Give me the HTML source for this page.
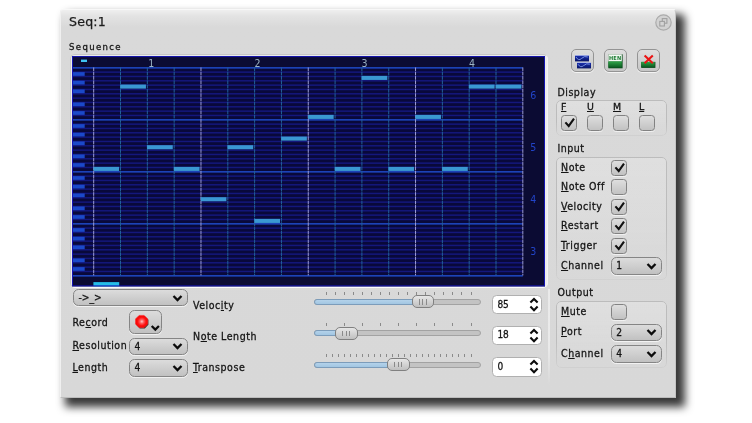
<!DOCTYPE html>
<html lang="en"><head><meta charset="utf-8"><title>Seq:1</title>
<style>
html,body{margin:0;padding:0}
body{width:752px;height:423px;background:#fff;position:relative;overflow:hidden;font-family:"DejaVu Sans Condensed","DejaVu Sans","Liberation Sans",sans-serif;font-stretch:condensed;color:#141414;-webkit-text-stroke:0.28px #141414}
body *{position:absolute;box-sizing:border-box}
.win{left:60px;top:9px;width:616px;height:388.5px;background:linear-gradient(#efefef 0,#e3e3e3 6px,#d9d9d9 17px,#d8d8d8 100%);border-top:1px solid #f8f8f8;border-left:1px solid #f0f0f0;border-right:1px solid #c4c4c4;border-bottom:1px solid #bcbcbc;border-radius:3px 3px 0 0;box-shadow:7px 7px 9px 2px rgba(0,0,0,.78)}
.title{font-family:"DejaVu Sans","Liberation Sans",sans-serif;font-stretch:normal;font-size:12.6px;letter-spacing:.2px;line-height:18px;white-space:nowrap;color:#1c1c1c;-webkit-text-stroke:0.25px #1c1c1c}
.lb{font-size:10.5px;line-height:14px;white-space:nowrap;letter-spacing:.55px;color:#141414}
.lb u{position:static;text-decoration:underline;text-underline-offset:1px;text-decoration-thickness:1px}
.fl{font-family:"DejaVu Sans","Liberation Sans",sans-serif;font-stretch:normal;font-size:9.4px;letter-spacing:0;-webkit-text-stroke:0.3px #141414}
.lb.fl u{text-underline-offset:1px;text-decoration-thickness:1.2px}
.sm{font-size:9.5px;letter-spacing:1.35px}
.layer{left:0;top:0;width:752px;height:423px;will-change:transform}
.frame{left:69.5px;top:54px;width:478.5px;height:233.8px;border-radius:5px;background:#ececec;border:1px solid #c6c6c6;border-bottom-color:#fafafa;border-right-color:#f4f4f4}
.roll text{font-family:"DejaVu Sans Condensed","DejaVu Sans","Liberation Sans",sans-serif;-webkit-text-stroke:0}
.bt{font-size:10.5px;fill:#9cb4c4;text-anchor:middle}
.oc{font-size:10.5px;fill:#2244c8;text-anchor:middle}
.vsep{left:547.5px;top:289px;width:2px;height:97px;background:linear-gradient(rgba(236,236,236,.9) 60%,rgba(236,236,236,0))}
.tb{width:23px;height:23px;border-radius:5px;border:1px solid #949494;background:linear-gradient(#dedede,#c6c6c6);box-shadow:0 1px 0 rgba(255,255,255,.7)}
.tb svg{left:3px;top:3.4px}
.gb{border-radius:5px;border:1px solid #bcbcbc;background:linear-gradient(rgba(255,255,255,.18),rgba(255,255,255,.02));-webkit-mask-image:linear-gradient(#000 60%,rgba(0,0,0,.25));mask-image:linear-gradient(#000 60%,rgba(0,0,0,.25))}
.ck{width:16px;height:16px;border-radius:3.5px;border:1px solid #828282;background:linear-gradient(#dedede,#c2c2c2);box-shadow:0 1px 0 rgba(255,255,255,.6)}
.ck svg{left:-1px;top:-1px}
.cb{border-radius:5.5px;border:1px solid #858585;background:linear-gradient(#dcdcdc,#c1c1c1);box-shadow:0 1px 0 rgba(255,255,255,.65)}
.cb span{left:4.4px;top:1.1px;font-size:10.2px;line-height:14px;white-space:nowrap}
.cb .cv{right:4px;top:3.6px}
.rec svg{left:-1px;top:-1px}
.gr{left:313.8px;width:167.5px;height:6px;border-radius:3px;background:#c3c3c3;border:1px solid #a2a2a2}
.gf{left:313.8px;height:6px;border-radius:3px;background:linear-gradient(#b4d2ea,#a2c6e2);border:1px solid #7c9cba}
.tk{width:1px;height:3.3px;background:#8a8a8a}
.hd{width:22.4px;height:13.2px;border-radius:5px;border:1px solid #808080;background:linear-gradient(#e6e6e6,#c0c0c0)}
.hd b{top:3.2px;width:1px;height:5.2px;background:#8a8a8a}
.hd b:nth-child(1){left:6.2px}.hd b:nth-child(2){left:9.4px}.hd b:nth-child(3){left:12.6px}
.sp{left:492px;width:50.4px;height:19.4px;border-radius:4.5px;border:1px solid #b0b0b0;background:#fff}
.sp span{left:4.4px;top:1.9px;font-size:10px;line-height:14px}
.sp svg{right:2.6px;top:1px}
</style></head>
<body>
<div class="win"></div>
<div class="layer">
<div class="title" style="left:69px;top:13.2px">Seq:1</div>
<div class="lb sm" style="left:69px;top:39.6px">Sequence</div>
<svg class="abs" style="left:655px;top:13.5px" width="17" height="17" viewBox="0 0 17 17"><circle cx="8.5" cy="8.5" r="7.7" fill="#d2d2d2" stroke="#ababab" stroke-width="1.2"/><rect x="7.3" y="4.6" width="4.6" height="4.6" fill="none" stroke="#a0a0a0" stroke-width="1.1"/><rect x="4.8" y="7.4" width="4.6" height="4.6" fill="#d4d4d4" stroke="#a0a0a0" stroke-width="1.1"/></svg>
<div class="frame"></div>
<svg class="roll" width="752" height="423" viewBox="0 0 752 423" style="left:0;top:0">
<rect x="72" y="56.1" width="473" height="230.3" fill="#0b0b33"/>
<rect x="72" y="67.45" width="450.82" height="207.98" fill="#09093a"/>
<rect x="72" y="67.10" width="450.82" height="1.5" fill="#1f49c4"/>
<rect x="72" y="71.38" width="450.82" height="1.5" fill="#14177c"/>
<rect x="72" y="75.72" width="450.82" height="1.5" fill="#14177c"/>
<rect x="72" y="80.05" width="450.82" height="1.5" fill="#14177c"/>
<rect x="72" y="84.38" width="450.82" height="1.5" fill="#14177c"/>
<rect x="72" y="88.72" width="450.82" height="1.5" fill="#14177c"/>
<rect x="72" y="93.05" width="450.82" height="1.5" fill="#14177c"/>
<rect x="72" y="97.38" width="450.82" height="1.5" fill="#14177c"/>
<rect x="72" y="101.71" width="450.82" height="1.5" fill="#14177c"/>
<rect x="72" y="106.05" width="450.82" height="1.5" fill="#14177c"/>
<rect x="72" y="110.38" width="450.82" height="1.5" fill="#14177c"/>
<rect x="72" y="114.71" width="450.82" height="1.5" fill="#14177c"/>
<rect x="72" y="119.10" width="450.82" height="1.5" fill="#1f49c4"/>
<rect x="72" y="123.38" width="450.82" height="1.5" fill="#14177c"/>
<rect x="72" y="127.71" width="450.82" height="1.5" fill="#14177c"/>
<rect x="72" y="132.04" width="450.82" height="1.5" fill="#14177c"/>
<rect x="72" y="136.38" width="450.82" height="1.5" fill="#14177c"/>
<rect x="72" y="140.71" width="450.82" height="1.5" fill="#14177c"/>
<rect x="72" y="145.04" width="450.82" height="1.5" fill="#14177c"/>
<rect x="72" y="149.38" width="450.82" height="1.5" fill="#14177c"/>
<rect x="72" y="153.71" width="450.82" height="1.5" fill="#14177c"/>
<rect x="72" y="158.04" width="450.82" height="1.5" fill="#14177c"/>
<rect x="72" y="162.38" width="450.82" height="1.5" fill="#14177c"/>
<rect x="72" y="166.71" width="450.82" height="1.5" fill="#14177c"/>
<rect x="72" y="171.09" width="450.82" height="1.5" fill="#1f49c4"/>
<rect x="72" y="175.38" width="450.82" height="1.5" fill="#14177c"/>
<rect x="72" y="179.71" width="450.82" height="1.5" fill="#14177c"/>
<rect x="72" y="184.04" width="450.82" height="1.5" fill="#14177c"/>
<rect x="72" y="188.37" width="450.82" height="1.5" fill="#14177c"/>
<rect x="72" y="192.71" width="450.82" height="1.5" fill="#14177c"/>
<rect x="72" y="197.04" width="450.82" height="1.5" fill="#14177c"/>
<rect x="72" y="201.37" width="450.82" height="1.5" fill="#14177c"/>
<rect x="72" y="205.71" width="450.82" height="1.5" fill="#14177c"/>
<rect x="72" y="210.04" width="450.82" height="1.5" fill="#14177c"/>
<rect x="72" y="214.37" width="450.82" height="1.5" fill="#14177c"/>
<rect x="72" y="218.71" width="450.82" height="1.5" fill="#14177c"/>
<rect x="72" y="223.09" width="450.82" height="1.5" fill="#1f49c4"/>
<rect x="72" y="227.37" width="450.82" height="1.5" fill="#14177c"/>
<rect x="72" y="231.70" width="450.82" height="1.5" fill="#14177c"/>
<rect x="72" y="236.04" width="450.82" height="1.5" fill="#14177c"/>
<rect x="72" y="240.37" width="450.82" height="1.5" fill="#14177c"/>
<rect x="72" y="244.70" width="450.82" height="1.5" fill="#14177c"/>
<rect x="72" y="249.04" width="450.82" height="1.5" fill="#14177c"/>
<rect x="72" y="253.37" width="450.82" height="1.5" fill="#14177c"/>
<rect x="72" y="257.70" width="450.82" height="1.5" fill="#14177c"/>
<rect x="72" y="262.04" width="450.82" height="1.5" fill="#14177c"/>
<rect x="72" y="266.37" width="450.82" height="1.5" fill="#14177c"/>
<rect x="72" y="270.70" width="450.82" height="1.5" fill="#14177c"/>
<rect x="72" y="275.08" width="450.82" height="1.5" fill="#1f49c4"/>
<rect x="72" y="72.13" width="12.7" height="3.73" fill="#1b49c9"/>
<rect x="72" y="80.80" width="12.7" height="3.73" fill="#1b49c9"/>
<rect x="72" y="89.47" width="12.7" height="3.73" fill="#1b49c9"/>
<rect x="72" y="102.46" width="12.7" height="3.73" fill="#1b49c9"/>
<rect x="72" y="111.13" width="12.7" height="3.73" fill="#1b49c9"/>
<rect x="72" y="124.13" width="12.7" height="3.73" fill="#1b49c9"/>
<rect x="72" y="132.79" width="12.7" height="3.73" fill="#1b49c9"/>
<rect x="72" y="141.46" width="12.7" height="3.73" fill="#1b49c9"/>
<rect x="72" y="154.46" width="12.7" height="3.73" fill="#1b49c9"/>
<rect x="72" y="163.13" width="12.7" height="3.73" fill="#1b49c9"/>
<rect x="72" y="176.12" width="12.7" height="3.73" fill="#1b49c9"/>
<rect x="72" y="184.79" width="12.7" height="3.73" fill="#1b49c9"/>
<rect x="72" y="193.46" width="12.7" height="3.73" fill="#1b49c9"/>
<rect x="72" y="206.46" width="12.7" height="3.73" fill="#1b49c9"/>
<rect x="72" y="215.12" width="12.7" height="3.73" fill="#1b49c9"/>
<rect x="72" y="228.12" width="12.7" height="3.73" fill="#1b49c9"/>
<rect x="72" y="236.79" width="12.7" height="3.73" fill="#1b49c9"/>
<rect x="72" y="245.45" width="12.7" height="3.73" fill="#1b49c9"/>
<rect x="72" y="258.45" width="12.7" height="3.73" fill="#1b49c9"/>
<rect x="72" y="267.12" width="12.7" height="3.73" fill="#1b49c9"/>
<line x1="93.70" y1="67.45" x2="93.70" y2="275.43" stroke="#9c9cd4" stroke-width="1" stroke-dasharray="3.7 0.6"/>
<line x1="120.52" y1="67.45" x2="120.52" y2="275.43" stroke="#22609a" stroke-width="1" stroke-dasharray="3.7 0.6"/>
<line x1="147.34" y1="67.45" x2="147.34" y2="275.43" stroke="#22609a" stroke-width="1" stroke-dasharray="3.7 0.6"/>
<line x1="174.16" y1="67.45" x2="174.16" y2="275.43" stroke="#22609a" stroke-width="1" stroke-dasharray="3.7 0.6"/>
<line x1="200.98" y1="67.45" x2="200.98" y2="275.43" stroke="#9c9cd4" stroke-width="1" stroke-dasharray="3.7 0.6"/>
<line x1="227.80" y1="67.45" x2="227.80" y2="275.43" stroke="#22609a" stroke-width="1" stroke-dasharray="3.7 0.6"/>
<line x1="254.62" y1="67.45" x2="254.62" y2="275.43" stroke="#22609a" stroke-width="1" stroke-dasharray="3.7 0.6"/>
<line x1="281.44" y1="67.45" x2="281.44" y2="275.43" stroke="#22609a" stroke-width="1" stroke-dasharray="3.7 0.6"/>
<line x1="308.26" y1="67.45" x2="308.26" y2="275.43" stroke="#9c9cd4" stroke-width="1" stroke-dasharray="3.7 0.6"/>
<line x1="335.08" y1="67.45" x2="335.08" y2="275.43" stroke="#22609a" stroke-width="1" stroke-dasharray="3.7 0.6"/>
<line x1="361.90" y1="67.45" x2="361.90" y2="275.43" stroke="#22609a" stroke-width="1" stroke-dasharray="3.7 0.6"/>
<line x1="388.72" y1="67.45" x2="388.72" y2="275.43" stroke="#22609a" stroke-width="1" stroke-dasharray="3.7 0.6"/>
<line x1="415.54" y1="67.45" x2="415.54" y2="275.43" stroke="#9c9cd4" stroke-width="1" stroke-dasharray="3.7 0.6"/>
<line x1="442.36" y1="67.45" x2="442.36" y2="275.43" stroke="#22609a" stroke-width="1" stroke-dasharray="3.7 0.6"/>
<line x1="469.18" y1="67.45" x2="469.18" y2="275.43" stroke="#22609a" stroke-width="1" stroke-dasharray="3.7 0.6"/>
<line x1="496.00" y1="67.45" x2="496.00" y2="275.43" stroke="#22609a" stroke-width="1" stroke-dasharray="3.7 0.6"/>
<line x1="522.82" y1="67.45" x2="522.82" y2="275.43" stroke="#9c9cd4" stroke-width="1" stroke-dasharray="3.7 0.6"/>
<rect x="93.40" y="166.86" width="25.72" height="4.08" fill="#3a98d2"/>
<rect x="120.22" y="84.53" width="25.72" height="4.08" fill="#3a98d2"/>
<rect x="147.04" y="145.19" width="25.72" height="4.08" fill="#3a98d2"/>
<rect x="173.86" y="166.86" width="25.72" height="4.08" fill="#3a98d2"/>
<rect x="200.68" y="197.19" width="25.72" height="4.08" fill="#3a98d2"/>
<rect x="227.50" y="145.19" width="25.72" height="4.08" fill="#3a98d2"/>
<rect x="254.32" y="218.86" width="25.72" height="4.08" fill="#3a98d2"/>
<rect x="281.14" y="136.53" width="25.72" height="4.08" fill="#3a98d2"/>
<rect x="307.96" y="114.86" width="25.72" height="4.08" fill="#3a98d2"/>
<rect x="334.78" y="166.86" width="25.72" height="4.08" fill="#3a98d2"/>
<rect x="361.60" y="75.87" width="25.72" height="4.08" fill="#3a98d2"/>
<rect x="388.42" y="166.86" width="25.72" height="4.08" fill="#3a98d2"/>
<rect x="415.24" y="114.86" width="25.72" height="4.08" fill="#3a98d2"/>
<rect x="442.06" y="166.86" width="25.72" height="4.08" fill="#3a98d2"/>
<rect x="468.88" y="84.53" width="25.72" height="4.08" fill="#3a98d2"/>
<rect x="495.70" y="84.53" width="25.72" height="4.08" fill="#3a98d2"/>
<rect x="81" y="59.6" width="6" height="2.4" fill="#3fc3f3"/>
<rect x="93.40" y="282.1" width="25.82" height="4.3" fill="#25bde8"/>
<text x="151.2" y="67" class="bt">1</text>
<text x="257.6" y="67" class="bt">2</text>
<text x="364.6" y="67" class="bt">3</text>
<text x="472" y="67" class="bt">4</text>
<text x="533.3" y="98.5" class="oc">6</text>
<text x="533.3" y="150.5" class="oc">5</text>
<text x="533.3" y="202.5" class="oc">4</text>
<text x="533.3" y="254.5" class="oc">3</text>
<rect x="72.5" y="56.6" width="472" height="229.3" fill="none" stroke="#1414b4" stroke-width="1"/>
</svg>
<div class="vsep"></div>
<div class="tb" style="left:571.3px;top:48.8px"></div>
<div class="tb" style="left:604px;top:48.8px"></div>
<div class="tb" style="left:636.6px;top:48.8px"></div>
<svg class="roll" width="752" height="423" viewBox="0 0 752 423" style="left:0;top:0"><defs><linearGradient id="gg" x1="0" y1="0" x2="0" y2="1"><stop offset="0" stop-color="#2fa548"/><stop offset="1" stop-color="#0a5a20"/></linearGradient><linearGradient id="bb" x1="0" y1="0" x2="0" y2="1"><stop offset="0" stop-color="#1a2fae"/><stop offset="1" stop-color="#081466"/></linearGradient></defs><rect x="575" y="54.8" width="14" height="1.2" fill="#e8eeff"/><rect x="575" y="55.6" width="14" height="5.8" fill="url(#bb)"/><path d="M576 57 Q578.6 61.4 581.6 58.4 T587.8 57" fill="none" stroke="#7f98e8" stroke-width="0.9"/><rect x="577" y="62.3" width="14" height="1" fill="#b8c4f0"/><rect x="577" y="62.9" width="14" height="5.5" fill="url(#bb)"/><path d="M578 64.2 Q580.6 68.4 583.6 65.6 T589.8 64.2" fill="none" stroke="#7f98e8" stroke-width="0.9"/><rect x="608.4" y="54.3" width="14.2" height="14" fill="#0a4a1a"/><rect x="608.4" y="54.3" width="13.4" height="7.2" fill="#f4faf4"/><rect x="608.4" y="61.4" width="13.4" height="6.2" fill="url(#gg)"/><text x="608.9" y="60.3" font-size="5.6" font-family="Liberation Sans, sans-serif" font-weight="bold" fill="#187a30" letter-spacing="0.2">HEN</text><rect x="641.2" y="61.9" width="14.2" height="6" fill="#0a4a1a"/><rect x="641.2" y="61.9" width="13.5" height="5.2" fill="url(#gg)"/><path d="M644.6 55.4 L652.8 63.2 M652.8 55.4 L644.6 63.2" stroke="#ea1414" stroke-width="2.1" fill="none"/></svg>
<div class="lb" style="left:557.4px;top:84.5px">Display</div>
<div class="gb" style="left:556px;top:100.3px;width:111px;height:36px"></div>
<div class="lb fl" style="left:561px;top:99.9px"><u>F</u></div>
<div class="ck" style="left:561.3px;top:115px"><svg width="16" height="16" viewBox="0 0 16 16"><path d="M4.4 7.4 L7.7 11 L13 3.6" fill="none" stroke="#111" stroke-width="2.1" stroke-linejoin="miter"/></svg></div>
<div class="lb fl" style="left:587px;top:99.9px"><u>U</u></div>
<div class="ck" style="left:587.25px;top:115px"></div>
<div class="lb fl" style="left:613px;top:99.9px"><u>M</u></div>
<div class="ck" style="left:613.1999999999999px;top:115px"></div>
<div class="lb fl" style="left:639px;top:99.9px"><u>L</u></div>
<div class="ck" style="left:639.15px;top:115px"></div>
<div class="lb" style="left:557.4px;top:141.0px">Input</div>
<div class="gb" style="left:556px;top:156.7px;width:111px;height:123px"></div>
<div class="lb" style="left:561px;top:159.8px"><u>N</u>ote</div>
<div class="ck" style="left:610.7px;top:159.70000000000002px"><svg width="16" height="16" viewBox="0 0 16 16"><path d="M4.4 7.4 L7.7 11 L13 3.6" fill="none" stroke="#111" stroke-width="2.1" stroke-linejoin="miter"/></svg></div>
<div class="lb" style="left:561px;top:179.2px"><u>N</u>ote Off</div>
<div class="ck" style="left:610.7px;top:179.1px"></div>
<div class="lb" style="left:561px;top:198.8px"><u>V</u>elocity</div>
<div class="ck" style="left:610.7px;top:198.70000000000002px"><svg width="16" height="16" viewBox="0 0 16 16"><path d="M4.4 7.4 L7.7 11 L13 3.6" fill="none" stroke="#111" stroke-width="2.1" stroke-linejoin="miter"/></svg></div>
<div class="lb" style="left:561px;top:218.2px"><u>R</u>estart</div>
<div class="ck" style="left:610.7px;top:218.1px"><svg width="16" height="16" viewBox="0 0 16 16"><path d="M4.4 7.4 L7.7 11 L13 3.6" fill="none" stroke="#111" stroke-width="2.1" stroke-linejoin="miter"/></svg></div>
<div class="lb" style="left:561px;top:237.6px"><u>T</u>rigger</div>
<div class="ck" style="left:610.7px;top:237.5px"><svg width="16" height="16" viewBox="0 0 16 16"><path d="M4.4 7.4 L7.7 11 L13 3.6" fill="none" stroke="#111" stroke-width="2.1" stroke-linejoin="miter"/></svg></div>
<div class="lb" style="left:561px;top:258.0px"><u>C</u>hannel</div>
<div class="cb" style="left:610.8px;top:257.4px;width:51px;height:17.6px"><span>1</span><svg class="cv" width="11" height="9" viewBox="0 0 11 9"><path d="M1.5 2 L5.5 6 L9.5 2" fill="none" stroke="#0c0c0c" stroke-width="2.3"/></svg></div>
<div class="lb" style="left:557.4px;top:284.8px">Output</div>
<div class="gb" style="left:556px;top:301.2px;width:111px;height:67px"></div>
<div class="lb" style="left:561px;top:303.5px"><u>M</u>ute</div>
<div class="ck" style="left:610.7px;top:303.6px"></div>
<div class="lb" style="left:561px;top:324.0px"><u>P</u>ort</div>
<div class="cb" style="left:610.8px;top:323.6px;width:51px;height:17.6px"><span>2</span><svg class="cv" width="11" height="9" viewBox="0 0 11 9"><path d="M1.5 2 L5.5 6 L9.5 2" fill="none" stroke="#0c0c0c" stroke-width="2.3"/></svg></div>
<div class="lb" style="left:561px;top:345.5px">C<u>h</u>annel</div>
<div class="cb" style="left:610.8px;top:345.4px;width:51px;height:17.6px"><span>4</span><svg class="cv" width="11" height="9" viewBox="0 0 11 9"><path d="M1.5 2 L5.5 6 L9.5 2" fill="none" stroke="#0c0c0c" stroke-width="2.3"/></svg></div>
<div class="cb" style="left:73px;top:289.4px;width:114.8px;height:16.8px"><span>->_></span><svg class="cv" width="11" height="9" viewBox="0 0 11 9"><path d="M1.5 2 L5.5 6 L9.5 2" fill="none" stroke="#0c0c0c" stroke-width="2.3"/></svg></div>
<div class="lb" style="left:72.4px;top:314.6px">Re<u>c</u>ord</div>
<div class="cb rec" style="left:129.1px;top:310.2px;width:33.4px;height:23.4px"><svg width="33" height="23" viewBox="0 0 33 23"><defs><radialGradient id="rg" cx="0.52" cy="0.5" r="0.55"><stop offset="0" stop-color="#ffc8c8"/><stop offset="0.3" stop-color="#ff5a5a"/><stop offset="0.62" stop-color="#ff1010"/><stop offset="1" stop-color="#f00000"/></radialGradient></defs><polygon points="19.40,14.83 15.83,18.40 10.77,18.40 7.20,14.83 7.20,9.77 10.77,6.20 15.83,6.20 19.40,9.77" fill="#40302c"/><polygon points="18.70,14.03 15.13,17.60 10.07,17.60 6.50,14.03 6.50,8.97 10.07,5.40 15.13,5.40 18.70,8.97" fill="url(#rg)" stroke="#ff2a2a" stroke-width="0.6"/><path d="M22.7 15.9 L26.3 19.6 L29.9 15.9" fill="none" stroke="#0c0c0c" stroke-width="2.2"/></svg></div>
<div class="lb" style="left:72.4px;top:338.0px"><u>R</u>esolution</div>
<div class="cb" style="left:129px;top:337.6px;width:59px;height:17.4px"><span>4</span><svg class="cv" width="11" height="9" viewBox="0 0 11 9"><path d="M1.5 2 L5.5 6 L9.5 2" fill="none" stroke="#0c0c0c" stroke-width="2.3"/></svg></div>
<div class="lb" style="left:72.4px;top:359.6px"><u>L</u>ength</div>
<div class="cb" style="left:129px;top:359.4px;width:59px;height:17.4px"><span>4</span><svg class="cv" width="11" height="9" viewBox="0 0 11 9"><path d="M1.5 2 L5.5 6 L9.5 2" fill="none" stroke="#0c0c0c" stroke-width="2.3"/></svg></div>
<div class="lb" style="left:193px;top:297.5px">Veloc<u>i</u>ty</div>
<div class="lb" style="left:193px;top:328.8px">N<u>o</u>te Length</div>
<div class="lb" style="left:193px;top:360.2px"><u>T</u>ranspose</div>
<div class="gr" style="top:299px"></div><div class="gf" style="top:299px;width:106.0px"></div><i class="tk" style="left:325.50px;top:291.6px"></i><i class="tk" style="left:334.56px;top:291.6px"></i><i class="tk" style="left:343.62px;top:291.6px"></i><i class="tk" style="left:352.69px;top:291.6px"></i><i class="tk" style="left:361.75px;top:291.6px"></i><i class="tk" style="left:370.81px;top:291.6px"></i><i class="tk" style="left:379.88px;top:291.6px"></i><i class="tk" style="left:388.94px;top:291.6px"></i><i class="tk" style="left:398.00px;top:291.6px"></i><i class="tk" style="left:407.06px;top:291.6px"></i><i class="tk" style="left:416.12px;top:291.6px"></i><i class="tk" style="left:425.19px;top:291.6px"></i><i class="tk" style="left:434.25px;top:291.6px"></i><i class="tk" style="left:443.31px;top:291.6px"></i><i class="tk" style="left:452.38px;top:291.6px"></i><i class="tk" style="left:461.44px;top:291.6px"></i><i class="tk" style="left:470.50px;top:291.6px"></i><div class="hd" style="left:412px;top:295.3px"><b></b><b></b><b></b></div>
<div class="gr" style="top:330.3px"></div><div class="gf" style="top:330.3px;width:29.2px"></div><i class="tk" style="left:325.50px;top:322.90000000000003px"></i><i class="tk" style="left:343.62px;top:322.90000000000003px"></i><i class="tk" style="left:361.75px;top:322.90000000000003px"></i><i class="tk" style="left:379.88px;top:322.90000000000003px"></i><i class="tk" style="left:398.00px;top:322.90000000000003px"></i><i class="tk" style="left:416.12px;top:322.90000000000003px"></i><i class="tk" style="left:434.25px;top:322.90000000000003px"></i><i class="tk" style="left:452.38px;top:322.90000000000003px"></i><i class="tk" style="left:470.50px;top:322.90000000000003px"></i><div class="hd" style="left:335.2px;top:326.6px"><b></b><b></b><b></b></div>
<div class="gr" style="top:361.5px"></div><div class="gf" style="top:361.5px;width:81.2px"></div><i class="tk" style="left:325.50px;top:354.1px"></i><i class="tk" style="left:331.54px;top:354.1px"></i><i class="tk" style="left:337.58px;top:354.1px"></i><i class="tk" style="left:343.62px;top:354.1px"></i><i class="tk" style="left:349.67px;top:354.1px"></i><i class="tk" style="left:355.71px;top:354.1px"></i><i class="tk" style="left:361.75px;top:354.1px"></i><i class="tk" style="left:367.79px;top:354.1px"></i><i class="tk" style="left:373.83px;top:354.1px"></i><i class="tk" style="left:379.88px;top:354.1px"></i><i class="tk" style="left:385.92px;top:354.1px"></i><i class="tk" style="left:391.96px;top:354.1px"></i><i class="tk" style="left:398.00px;top:354.1px"></i><i class="tk" style="left:404.04px;top:354.1px"></i><i class="tk" style="left:410.08px;top:354.1px"></i><i class="tk" style="left:416.12px;top:354.1px"></i><i class="tk" style="left:422.17px;top:354.1px"></i><i class="tk" style="left:428.21px;top:354.1px"></i><i class="tk" style="left:434.25px;top:354.1px"></i><i class="tk" style="left:440.29px;top:354.1px"></i><i class="tk" style="left:446.33px;top:354.1px"></i><i class="tk" style="left:452.38px;top:354.1px"></i><i class="tk" style="left:458.42px;top:354.1px"></i><i class="tk" style="left:464.46px;top:354.1px"></i><i class="tk" style="left:470.50px;top:354.1px"></i><div class="hd" style="left:387.2px;top:357.8px"><b></b><b></b><b></b></div>
<div class="sp" style="top:294.7px"><span>85</span><svg width="10" height="16" viewBox="0 0 10 16"><path d="M1.4 5.6 L5 2 L8.6 5.6 M1.4 9.6 L5 13.2 L8.6 9.6" fill="none" stroke="#0c0c0c" stroke-width="2.1"/></svg></div>
<div class="sp" style="top:325.6px"><span>18</span><svg width="10" height="16" viewBox="0 0 10 16"><path d="M1.4 5.6 L5 2 L8.6 5.6 M1.4 9.6 L5 13.2 L8.6 9.6" fill="none" stroke="#0c0c0c" stroke-width="2.1"/></svg></div>
<div class="sp" style="top:357.2px"><span>0</span><svg width="10" height="16" viewBox="0 0 10 16"><path d="M1.4 5.6 L5 2 L8.6 5.6 M1.4 9.6 L5 13.2 L8.6 9.6" fill="none" stroke="#0c0c0c" stroke-width="2.1"/></svg></div>
</div>
</body></html>
